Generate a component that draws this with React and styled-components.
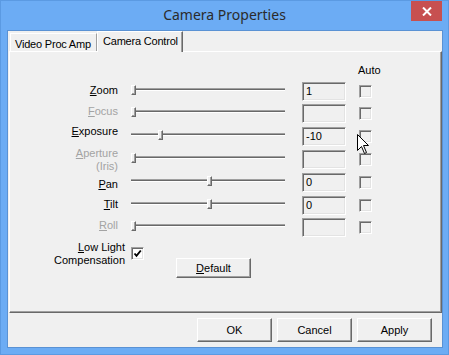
import React from 'react'
import styled, { createGlobalStyle } from 'styled-components'

const GlobalStyle = createGlobalStyle`
  html, body {
    margin: 0;
    padding: 0;
    background: #6cacf4;
  }
  * { box-sizing: border-box; }
`

const Window = styled.div`
  width: 449px;
  height: 355px;
  background: #6cacf4;
  border: 1px solid #5b9ae2;
  display: flex;
  flex-direction: column;
  font-family: "Liberation Sans", Arial, sans-serif;
  font-size: 11px;
  color: #000;
`

const TitleBar = styled.div`
  height: 29px;
  display: grid;
  grid-template-columns: 1fr auto 1fr;
`

const Title = styled.div`
  grid-column: 2;
  align-self: center;
  padding-bottom: 2px;
  font-family: "Noto Sans", "Open Sans", sans-serif;
  font-size: 14px;
  color: #2b2b2b;
`

const CloseButton = styled.div`
  grid-column: 3;
  justify-self: end;
  align-self: start;
  width: 31px;
  height: 20px;
  margin-right: 6px;
  background: #c75050;
  display: flex;
  align-items: center;
  justify-content: center;
`

const Client = styled.div`
  margin: 0 5px 6px 6px;
  flex: 1;
  background: #f0f0f0;
  border: 1px solid #5a92d4;
  display: flex;
  flex-direction: column;
`

const TabRow = styled.div`
  display: flex;
  align-items: flex-end;
  height: 20px;
  padding-left: 2px;
`

const Tab = styled.div`
  position: relative;
  height: ${({ active }) => (active ? 21 : 18)}px;
  width: ${({ w }) => w}px;
  margin-bottom: ${({ active }) => (active ? -1 : 0)}px;
  z-index: ${({ active }) => (active ? 2 : 1)};
  background: #f0f0f0;
  border-top: 1px solid #fff;
  border-left: 1px solid #fff;
  border-right: 1px solid ${({ active }) => (active ? '#696969' : '#a0a0a0')};
  box-shadow: ${({ active }) => (active ? 'inset -1px 0 #a0a0a0' : 'none')};
  padding: ${({ active }) => (active ? '3px 0 0 5px' : '4px 0 0 4px')};
  line-height: 13px;
  letter-spacing: -0.2px;
  white-space: nowrap;
`

const Panel = styled.div`
  position: relative;
  margin-left: 1px;
  height: 262px;
  background: #f0f0f0;
  border-top: 1px solid #fff;
  border-left: 1px solid #fff;
  border-right: 1px solid #696969;
  border-bottom: 1px solid #696969;
  box-shadow: inset -1px -1px #a0a0a0;
`

const Row = styled.div`
  display: grid;
  grid-template-columns: 108px 184px 57px 13px;
  align-items: start;
  height: ${({ h }) => h}px;
`

const AutoLabel = styled.div`
  grid-column: 4;
  margin-top: 12px;
  margin-left: -1px;
  line-height: 13px;
  white-space: nowrap;
`

const Label = styled.div`
  text-align: right;
  line-height: 13px;
  margin-top: ${({ nudge }) => nudge}px;
  color: ${({ disabled }) => (disabled ? '#a3a3a3' : '#000')};
  white-space: nowrap;
`

const Slider = styled.div`
  position: relative;
  height: 10px;
  margin: 3px 17px 0 13px;
`

const Track = styled.div`
  position: absolute;
  left: 0;
  right: 0;
  top: 3px;
  height: 3px;
  border-top: 1px solid #a0a0a0;
  border-bottom: 1px solid #fff;
  background: #696969;
`

const Thumb = styled.div`
  position: absolute;
  top: 0;
  width: 5px;
  height: 10px;
  background: #f0f0f0;
  border-top: 1px solid #fff;
  border-left: 1px solid #fff;
  border-right: 1px solid #696969;
  border-bottom: 1px solid #696969;
  box-shadow: inset -1px -1px #a0a0a0;
`

const TextBox = styled.div`
  width: 44px;
  height: 19px;
  border: 1px solid;
  border-color: #a0a0a0 #fff #fff #a0a0a0;
  box-shadow: inset 1px 1px #696969, inset -1px -1px #e3e3e3;
  background: #f0f0f0;
  padding-left: 3px;
  line-height: 17px;
`

const CheckBox = styled.div`
  width: 13px;
  height: 13px;
  margin-top: ${({ top }) => top}px;
  margin-left: ${({ left }) => left || 0}px;
  border: 1px solid;
  border-color: #a0a0a0 #fff #fff #a0a0a0;
  box-shadow: inset 1px 1px #696969, inset -1px -1px #e3e3e3;
  background: ${({ checked }) => (checked ? '#fff' : '#f0f0f0')};
  display: flex;
  align-items: center;
  justify-content: center;
`

const BottomRow = styled.div`
  display: flex;
  align-items: flex-start;
`

const WideLabel = styled(Label)`
  width: 115px;
  flex: none;
`

const Button = styled.div`
  width: 75px;
  height: ${({ h }) => h}px;
  margin-top: ${({ top }) => top || 0}px;
  margin-left: ${({ left }) => left || 0}px;
  background: #f0f0f0;
  border: 1px solid;
  border-color: #fff #696969 #696969 #fff;
  box-shadow: inset -1px -1px #a0a0a0;
  display: flex;
  align-items: center;
  justify-content: center;
  flex: none;
`

const ButtonBar = styled.div`
  display: flex;
  justify-content: flex-end;
  gap: 5px;
  padding: 5px 10px 0 0;
`

const Cursor = styled.svg`
  position: absolute;
  left: 347px;
  top: 82px;
`

const controls = [
  { key: 'Z', rest: 'oom', value: '1', pos: 0, h: 22, nudge: 2 },
  { key: 'F', rest: 'ocus', disabled: true, pos: 0, h: 23, nudge: 1 },
  { key: 'E', rest: 'xposure', value: '-10', pos: 0.18, h: 23, nudge: -2 },
  { key: 'A', rest: 'perture', second: '(Iris)', disabled: true, pos: 0, h: 23, nudge: -3 },
  { key: 'P', rest: 'an', value: '0', pos: 0.51, h: 23, nudge: 5 },
  { key: 'T', rest: 'ilt', value: '0', pos: 0.51, h: 22, nudge: 2 },
  { key: 'R', rest: 'oll', disabled: true, pos: 0, h: 22, nudge: 1 },
]

function ControlRow({ item }) {
  return (
    <Row h={item.h}>
      <Label disabled={item.disabled} nudge={item.nudge}>
        <u>{item.key}</u>{item.rest}
        {item.second && <><br />{item.second}</>}
      </Label>
      <Slider>
        <Track />
        <Thumb style={{ left: Math.round(item.pos * 149) }} />
      </Slider>
      <TextBox>{item.value}</TextBox>
      <CheckBox top={3} />
    </Row>
  )
}

export default function App() {
  return (
    <>
      <GlobalStyle />
      <Window>
        <TitleBar>
          <Title>Camera Properties</Title>
          <CloseButton>
            <svg width="10" height="9" viewBox="0 0 10 9">
              <path d="M1 0.5 L9 8.5 M9 0.5 L1 8.5" stroke="#fff" strokeWidth="2" />
            </svg>
          </CloseButton>
        </TitleBar>
        <Client>
          <TabRow>
            <Tab w={87}>Video Proc Amp</Tab>
            <Tab w={86} active>Camera Control</Tab>
          </TabRow>
          <Panel>
            <Row h={30}>
              <AutoLabel>Auto</AutoLabel>
            </Row>
            {controls.map((item) => (
              <ControlRow key={item.key} item={item} />
            ))}
            <BottomRow>
              <WideLabel nudge={1}>
                <u>L</u>ow Light<br />Compensation
              </WideLabel>
              <CheckBox checked top={7} left={6}>
                <svg width="9" height="9" viewBox="0 0 9 9">
                  <path d="M1.5 4.5 L3.5 6.8 L7.8 1.5" stroke="#000" strokeWidth="1.9" fill="none" />
                </svg>
              </CheckBox>
              <Button h={20} top={18} left={32}><span><u>D</u>efault</span></Button>
            </BottomRow>
            <Cursor width="13" height="21" viewBox="0 0 13 21">
              <path d="M0.5 0.5 L0.5 16.5 L4.5 12.5 L7.5 19.5 L9.5 18.5 L6.5 11.5 L11.5 11.5 Z" fill="#fff" stroke="#000" strokeWidth="1" />
            </Cursor>
          </Panel>
          <ButtonBar>
            <Button h={24}>OK</Button>
            <Button h={24}>Cancel</Button>
            <Button h={24}>Apply</Button>
          </ButtonBar>
        </Client>
      </Window>
    </>
  )
}
